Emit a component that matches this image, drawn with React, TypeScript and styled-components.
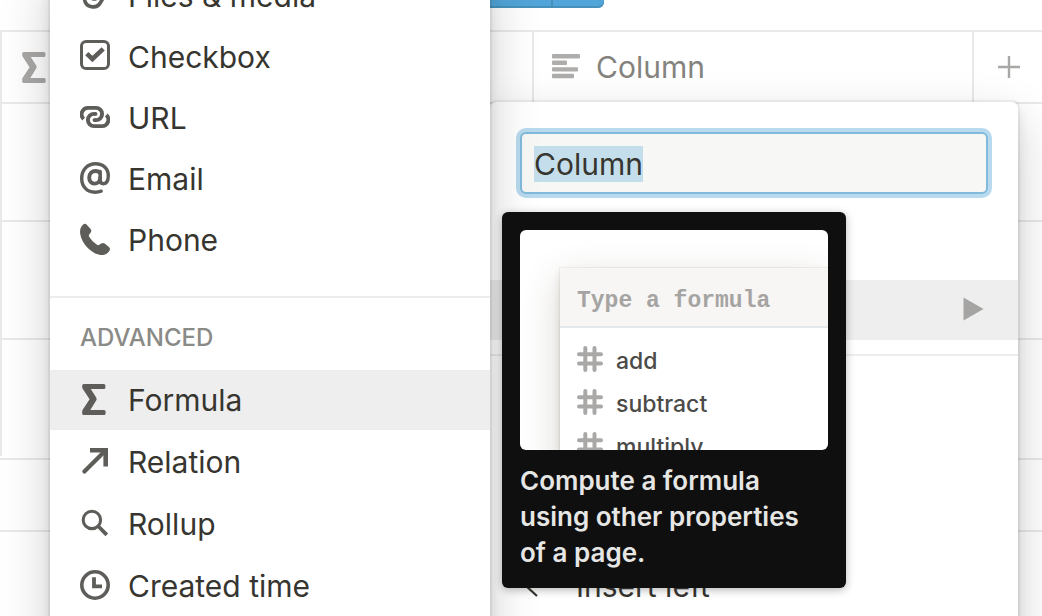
import React, { useEffect, useRef } from "react";
import styled, { createGlobalStyle } from "styled-components";

const GlobalStyle = createGlobalStyle`
  * { box-sizing: border-box; }
  body {
    margin: 0;
    background: #fff;
    color: #37352f;
    font-family: Inter, "Liberation Sans", sans-serif;
    font-size: 30px;
    line-height: 36px;
  }
  button, input { font: inherit; color: inherit; }
  svg { display: block; flex: none; }
`;

const Page = styled.main`
  position: relative;
  height: 100vh;
  overflow: hidden;
`;

const Toolbar = styled.div`
  display: flex;
  align-items: flex-end;
  justify-content: flex-end;
  height: 8px;
  width: 604px;
  margin-bottom: 22px;
  overflow: hidden;
`;

const ToolbarButton = styled.button<{ $end?: boolean }>`
  flex: none;
  width: ${(p) => (p.$end ? 53 : 120)}px;
  height: 60px;
  padding: 0;
  border: 0;
  border-left: ${(p) => (p.$end ? "2px solid #4590b8" : "0")};
  border-radius: ${(p) => (p.$end ? "0 6px 6px 0" : "6px 0 0 6px")};
  background: #52a5d8;
  box-shadow: inset 0 -2px 0 #4692bd;
`;

const Table = styled.table`
  width: 100%;
  table-layout: fixed;
  border-collapse: separate;
  border-spacing: 0;
`;

const HeadCell = styled.th`
  height: 74px;
  padding: 0 0 0 18px;
  border: 0 solid #e9e9e8;
  border-width: 2px 0 2px 2px;
  color: #84837e;
  font-weight: 400;
  text-align: left;
`;

const HeadLabel = styled.div`
  display: flex;
  align-items: center;
  gap: 16px;
`;

const AddButton = styled.button`
  display: block;
  padding: 0 0 0 6px;
  border: 0;
  background: none;
`;

const Cell = styled.td<{ $last?: boolean }>`
  height: ${(p) => (p.$last ? 116 : 118)}px;
  padding: 0;
  border: 0 solid #e9e9e8;
  border-width: 0 0 ${(p) => (p.$last ? 0 : 2)}px 2px;
`;

const TableFooter = styled.div`
  height: 74px;
  margin-top: 2px;
  border: 0 solid #e9e9e8;
  border-width: 2px 0;
`;

const Menu = styled.div`
  position: absolute;
  background: #fff;
  box-shadow: 0 0 0 2px rgba(15, 15, 15, 0.05), 0 6px 12px rgba(15, 15, 15, 0.1),
    0 18px 48px rgba(15, 15, 15, 0.2);
`;

const ColumnMenu = styled(Menu)`
  top: 102px;
  bottom: -60px;
  left: 490px;
  width: 528px;
  border-radius: 6px;
  overflow: hidden;
`;

const TypeMenu = styled(Menu)`
  top: -34px;
  bottom: -60px;
  left: 50px;
  width: 440px;
`;

const NameInput = styled.input`
  display: block;
  width: calc(100% - 60px);
  height: 62px;
  margin: 30px 30px 86px;
  padding: 2px 12px 0;
  border: 2px solid #80bbdc;
  border-radius: 6px;
  outline: 0;
  background: #f7f7f5;
  box-shadow: 0 0 0 4px #b9daee;
  &::selection { background: #c5deeb; color: #37352f; }
`;

const TypeRow = styled.button`
  display: flex;
  align-items: center;
  justify-content: flex-end;
  width: 100%;
  height: 60px;
  padding: 0 34px;
  border: 0;
  background: #eeeeee;
`;

const Divider = styled.hr`
  height: 2px;
  margin: 0;
  border: 0;
  background: #ededec;
`;

const MenuItem = styled.button<{ $active?: boolean }>`
  display: flex;
  align-items: center;
  gap: 18px;
  width: 100%;
  height: 60px;
  padding: 0 30px;
  border: 0;
  background: ${(p) => (p.$active ? "#eeeeee" : "none")};
  text-align: left;

  svg { margin-bottom: 2px; }
`;

const ColumnActions = styled.div`
  margin-top: 14px;
  padding-top: 200px;
  border-top: 2px solid #ededec;
`;

const ActionItem = styled(MenuItem)`
  gap: 26px;
`;

const Group = styled.div<{ $gap: number }>`
  display: grid;
  gap: ${(p) => p.$gap}px;
`;

const TypeDivider = styled(Divider)`
  margin-top: 26px;
`;

const GroupTitle = styled.div`
  height: 72px;
  padding: 22px 30px 0;
  color: #8a8a86;
  font-size: 24px;
  font-weight: 500;
`;

const Tooltip = styled.div`
  position: absolute;
  top: 212px;
  left: 502px;
  width: 344px;
  padding: 18px 18px 17px;
  border-radius: 6px;
  background: #0f0f0f;
  color: #e6e6e5;
  font-size: 26px;
  font-weight: 600;
  box-shadow: 0 2px 8px rgba(15, 15, 15, 0.3);
`;

const TooltipText = styled.p`
  margin: 0;
  padding-right: 20px;
`;

const Preview = styled.div`
  height: 220px;
  margin-bottom: 13px;
  padding: 38px 0 0 40px;
  border-radius: 6px;
  background: #fff;
  overflow: hidden;
`;

const PreviewCard = styled.div`
  height: 240px;
  color: #4b4a48;
  font-size: 23px;
  font-weight: 500;
  box-shadow: 0 0 0 1px rgba(60, 50, 20, 0.05), 0 4px 8px rgba(60, 50, 20, 0.12),
    0 12px 36px rgba(60, 50, 20, 0.2);
`;

const PreviewHead = styled.div`
  height: 60px;
  padding: 15px 17px 0;
  border-bottom: 2px solid #e5e8ea;
  background: #f7f6f5;
  color: #a5a4a2;
  font-family: "Liberation Mono", monospace;
  font-weight: 700;
`;

const PreviewItem = styled.div`
  display: flex;
  align-items: center;
  gap: 13px;
  height: 43px;
  padding-left: 17px;

  svg { margin-bottom: 4px; }
`;

const PreviewList = styled.div`
  padding-top: 11px;
`;

const ink = "#5e5d59";

const SigmaIcon = ({ color = ink }: { color?: string }) => (
  <svg width="30" height="34" viewBox="0 0 30 34" fill={color}>
    <path d="M3.8 2H23.8A1.6 1.6 0 0 1 25.4 3.6V5.4A1.6 1.6 0 0 1 23.8 7H10.8L16.3 15.8A2.2 2.2 0 0 1 16.3 18.2L10.3 28H24A1.6 1.6 0 0 1 25.6 29.6V31.4A1.6 1.6 0 0 1 24 33H3.8A1.6 1.6 0 0 1 2.2 31.4V29.4A3 3 0 0 1 2.7 27.8L9.6 17.2L2.7 6.8A3 3 0 0 1 2.2 5.2V3.6A1.6 1.6 0 0 1 3.8 2Z" />
  </svg>
);

const TextIcon = () => (
  <svg width="28" height="26" viewBox="0 0 28 26" fill="#aeadab">
    <rect y="0" width="28" height="4.4" rx="1" />
    <rect y="6.6" width="15" height="4.4" rx="1" />
    <rect y="13.2" width="26" height="4.4" rx="1" />
    <rect y="19.8" width="22" height="4.4" rx="1" />
  </svg>
);

const PlusIcon = () => (
  <svg width="22" height="24" viewBox="0 0 22 24" stroke="#a9a8a6" strokeWidth="2.4">
    <path d="M0 12H22M11 1V23" />
  </svg>
);

const ClipIcon = () => (
  <svg width="30" height="30" viewBox="0 0 30 30" fill="none" stroke={ink} strokeWidth="3.6" strokeLinecap="round">
    <path d="M25 15L20.5 22.5A8.6 8.6 0 0 1 4.5 19.5V10" />
    <path d="M20 11L17 17.6A3.6 3.6 0 0 1 10.6 16" />
  </svg>
);

const CheckboxIcon = () => (
  <svg width="30" height="32" viewBox="0 0 30 32" fill="none" stroke={ink}>
    <rect x="1.5" y="1.5" width="27" height="27" rx="4.6" strokeWidth="3" />
    <path d="M6.8 13.6L12.4 19L23.2 8.8" strokeWidth="4.6" />
  </svg>
);

const LinkIcon = () => (
  <svg width="30" height="30" viewBox="0 0 30 30" fill="none" stroke={ink} strokeWidth="3.9">
    <path d="M3.7 17A6.4 6.4 0 0 1 8.3 5.9H16A6.1 6.1 0 0 1 16 18.1H14.6" />
    <path d="M26.3 13A6.4 6.4 0 0 1 21.7 24.1H14A6.1 6.1 0 0 1 14 11.9H15.4" />
    <path d="M14.6 18.1H14.5M15.4 11.9H15.5" strokeLinecap="round" />
  </svg>
);

const AtIcon = () => (
  <svg width="30" height="32" viewBox="0 0 30 32" fill="none" stroke={ink} strokeWidth="3.4" strokeLinecap="round" strokeLinejoin="round">
    <path d="M21.2 29.2C19.4 29.9 17.4 30.2 15.2 30.2C7 30.2 1.7 24.8 1.7 16.2C1.7 7.8 7.4 1.8 15.6 1.8C23 1.8 28.3 6.6 28.3 13.6C28.3 18.6 26.4 21.7 23.4 21.7C21.2 21.7 20.2 20.4 20.2 18.2V9.4" strokeWidth="3.4" />
    <path d="M20 11.4C19.2 10 17.6 9 15.6 9C11.8 9 9.2 11.8 9.2 15.6C9.2 19.2 11.4 21.6 14.4 21.6C17.4 21.6 20.2 19.4 20.2 15.4" strokeWidth="3.9" />
  </svg>
);

const PhoneIcon = () => (
  <svg width="30" height="32" viewBox="0 0 30 32" fill={ink}>
    <path d="M3.2 1.4C4.4 0.5 5.8 0.6 6.8 1.7L10.6 5.9C11.6 7.1 11.5 8.4 10.7 9.5L9.2 11.4C8.6 12.2 8.7 12.9 9.2 13.7C11.1 16.7 14 19.7 17 21.7C17.8 22.3 18.5 22.3 19.3 21.7L21.2 20.5C22.4 19.7 23.6 19.8 24.7 20.6L28.9 23.9C30.2 25 30.3 26.5 29.3 27.9C26.9 31.5 23 33 18.6 31.6C9.6 29 1.6 20 0.2 10.7C-0.3 6.9 0.5 3.5 3.2 1.4Z" />
  </svg>
);

const ArrowIcon = () => (
  <svg width="30" height="30" viewBox="0 0 30 30" fill="none" stroke={ink} strokeWidth="4.6">
    <path d="M10 4.3H25.7V20.4" />
    <path d="M4.4 25.6L25 5" strokeLinecap="round" strokeWidth="4.2" />
  </svg>
);

const SearchIcon = () => (
  <svg width="30" height="30" viewBox="0 0 30 30" fill="none" stroke={ink}>
    <circle cx="11.9" cy="11.9" r="8.7" strokeWidth="3.1" />
    <path d="M18 18L26.8 26.8" strokeWidth="3.8" />
  </svg>
);

const ClockIcon = () => (
  <svg width="30" height="30" viewBox="0 0 30 30" fill="none" stroke={ink}>
    <circle cx="15" cy="15" r="13.2" strokeWidth="3.6" />
    <path d="M14 7.2V16.4H22" strokeWidth="3.8" />
  </svg>
);

const HashIcon = () => (
  <svg width="26" height="26" viewBox="0 0 26 26" stroke="#a9a8a7" strokeWidth="4" strokeLinecap="round">
    <path d="M2 8.3H24M2 17.5H24M8.3 2V24M17.5 2V24" />
  </svg>
);

const TriangleIcon = () => (
  <svg width="21" height="26" viewBox="0 0 21 26" fill="#a5a4a2">
    <path d="M0.5 0.5L20.5 12L0.5 23.5Z" />
  </svg>
);

const LeftArrowIcon = () => (
  <svg width="30" height="30" viewBox="0 0 30 30" fill="none" stroke="#37352f" strokeWidth="2.2">
    <path d="M17 4L5 15L17 26" />
  </svg>
);

const basicTypes = [
  { label: "Files & media", icon: <ClipIcon /> },
  { label: "Checkbox", icon: <CheckboxIcon /> },
  { label: "URL", icon: <LinkIcon /> },
  { label: "Email", icon: <AtIcon /> },
  { label: "Phone", icon: <PhoneIcon /> },
];

const advancedTypes = [
  { label: "Formula", icon: <SigmaIcon />, active: true },
  { label: "Relation", icon: <ArrowIcon /> },
  { label: "Rollup", icon: <SearchIcon /> },
  { label: "Created time", icon: <ClockIcon /> },
];

export default function App() {
  const nameRef = useRef<HTMLInputElement>(null);

  useEffect(() => {
    nameRef.current?.focus({ preventScroll: true });
    nameRef.current?.select();
  }, []);

  return (
    <Page>
      <GlobalStyle />
      <Toolbar>
        <ToolbarButton aria-label="New" />
        <ToolbarButton $end aria-label="More" />
      </Toolbar>
      <Table>
        <colgroup>
          <col style={{ width: 532 }} />
          <col style={{ width: 440 }} />
          <col />
        </colgroup>
        <thead>
          <tr>
            <HeadCell><SigmaIcon color="#a9a8a6" /></HeadCell>
            <HeadCell>
              <HeadLabel><TextIcon />Column</HeadLabel>
            </HeadCell>
            <HeadCell>
              <AddButton aria-label="Add column"><PlusIcon /></AddButton>
            </HeadCell>
          </tr>
        </thead>
        <tbody>
          {[0, 1, 2].map((row) => (
            <tr key={row}>
              <Cell $last={row === 2} />
              <Cell $last={row === 2} />
              <Cell $last={row === 2} />
            </tr>
          ))}
        </tbody>
      </Table>
      <TableFooter />

      <ColumnMenu>
        <NameInput ref={nameRef} aria-label="Column name" defaultValue="Column" />
        <TypeRow aria-label="Property type"><TriangleIcon /></TypeRow>
        <ColumnActions>
          <ActionItem><LeftArrowIcon />Insert left</ActionItem>
        </ColumnActions>
      </ColumnMenu>

      <TypeMenu>
        <Group $gap={1}>
          {basicTypes.map((t) => (
            <MenuItem key={t.label}>{t.icon}{t.label}</MenuItem>
          ))}
        </Group>
        <TypeDivider />
        <GroupTitle>ADVANCED</GroupTitle>
        <Group $gap={2}>
          {advancedTypes.map((t) => (
            <MenuItem key={t.label} $active={t.active}>{t.icon}{t.label}</MenuItem>
          ))}
        </Group>
      </TypeMenu>

      <Tooltip role="tooltip">
        <Preview>
          <PreviewCard>
            <PreviewHead>Type a formula</PreviewHead>
            <PreviewList>
              {["add", "subtract", "multiply"].map((name) => (
                <PreviewItem key={name}><HashIcon />{name}</PreviewItem>
              ))}
            </PreviewList>
          </PreviewCard>
        </Preview>
        <TooltipText>Compute a formula using other properties of a page.</TooltipText>
      </Tooltip>
    </Page>
  );
}
